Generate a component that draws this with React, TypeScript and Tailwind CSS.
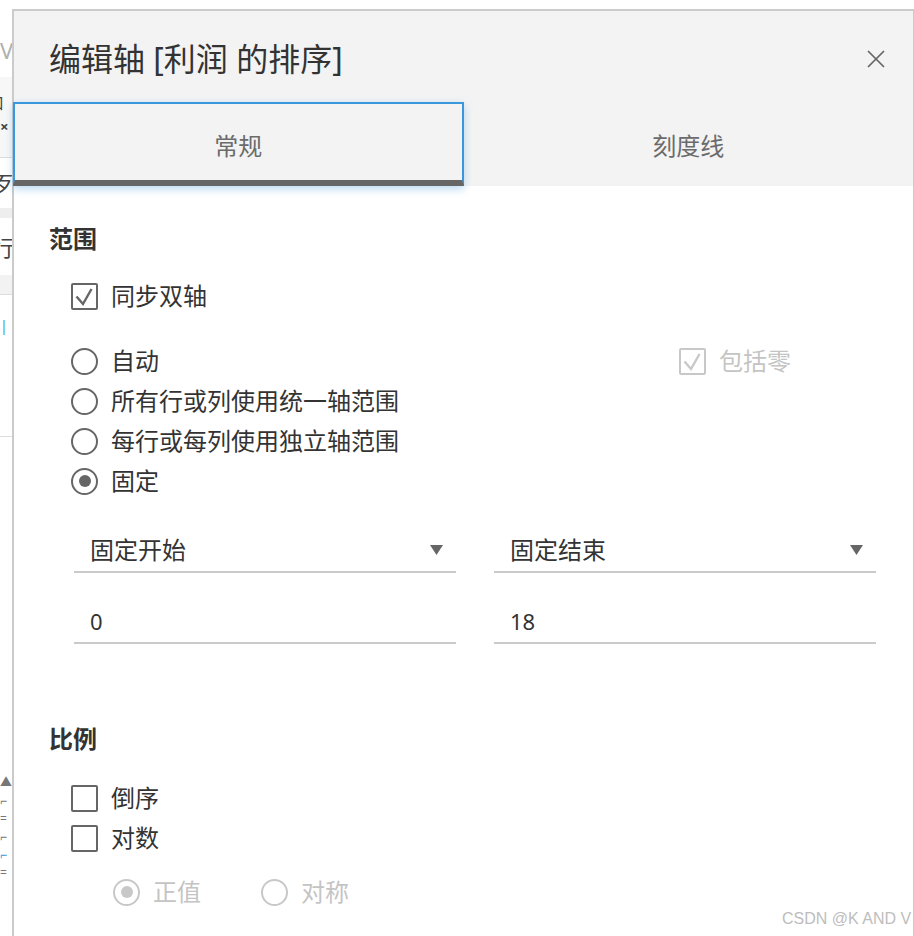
import { X } from 'lucide-react'

const font = { fontFamily: '"Noto Sans", "Noto Sans CJK SC", sans-serif' }

function Checkbox({ checked, disabled }: { checked?: boolean; disabled?: boolean }) {
    const color = disabled ? '#c8c8c8' : '#666666'
    return (
        <span
            className={`flex h-[27px] w-[27px] shrink-0 items-center justify-center rounded-[2px] border-2 ${disabled ? 'border-[#c8c8c8]' : 'border-[#666]'}`}
        >
            {checked && (
                <svg width="23" height="23" viewBox="0 0 23 23" fill="none">
                    <path d="M3.5 11.5 L10 19 L18.5 4" stroke={color} strokeWidth={2.4} />
                </svg>
            )}
        </span>
    )
}

function Radio({ checked, disabled }: { checked?: boolean; disabled?: boolean }) {
    return (
        <span
            className={`flex h-[27px] w-[27px] shrink-0 items-center justify-center rounded-full border-2 ${disabled ? 'border-[#c8c8c8]' : 'border-[#666]'}`}
        >
            {checked && (
                <span className={`h-[12px] w-[12px] rounded-full ${disabled ? 'bg-[#c8c8c8]' : 'bg-[#666]'}`} />
            )}
        </span>
    )
}

function Row({ children }: { children: React.ReactNode }) {
    return <div className="flex h-[40px] items-center gap-[13px]">{children}</div>
}

function Label({ text, disabled }: { text: string; disabled?: boolean }) {
    return (
        <span className={`text-[24px] leading-none ${disabled ? 'text-[#c4c4c4]' : 'text-[#333]'}`}>{text}</span>
    )
}

function Dropdown({ text }: { text: string }) {
    return (
        <div className="flex h-[44px] w-[382px] items-center justify-between border-b-2 border-[#cacaca] pl-[16px] pr-[13px]">
            <span className="text-[24px] leading-none text-[#333]">{text}</span>
            <svg width="13" height="10" viewBox="0 0 13 10">
                <path d="M0 0 H13 L6.5 10 Z" fill="#666" />
            </svg>
        </div>
    )
}

function Field({ value }: { value: string }) {
    return (
        <div className="flex h-[44px] w-[382px] items-center border-b-2 border-[#cacaca] pl-[16px]">
            <span className="text-[22px] leading-none text-[#333]">{value}</span>
        </div>
    )
}

export default function App() {
    return (
        <div className="relative flex h-[936px] w-[914px] overflow-hidden bg-white" style={font}>
            {/* page behind the dialog */}
            <div className="flex w-[12px] shrink-0 flex-col overflow-hidden text-[22px] leading-none">
                <div className="flex h-[77px] items-end pb-[16px] text-[#b0b0b0]">V</div>
                <div className="flex h-[81px] flex-col gap-[8px] border-b border-[#ddd] bg-[#f7f7f7] pt-[18px] text-[#444]">
                    <span className="-ml-[12px] text-[16px]">口</span>
                    <span className="text-[15px] font-bold">×</span>
                </div>
                <div className="flex h-[50px] items-center text-[#444]"><span className="-ml-[8px]">歹</span></div>
                <div className="h-[10px] bg-[#eee]" />
                <div className="flex h-[57px] items-center text-[#444]"><span className="-ml-[8px]">行</span></div>
                <div className="h-[20px] border-b border-[#ddd] bg-[#f2f2f2]" />
                <div className="h-[142px] border-b border-[#ddd] pt-[24px] text-[14px] text-[#3a96dd]">|</div>
                <div className="h-[340px]" />
                <div className="flex h-[150px] flex-col gap-[6px] text-[12px] text-[#777]">
                    <span>▲</span>
                    <span>⌐</span>
                    <span>=</span>
                    <span>⌐</span>
                    <span className="text-[#3a96dd]">⌐</span>
                    <span>=</span>
                </div>
            </div>

            {/* dialog */}
            <div className="mt-[9px] flex flex-1 flex-col border-l-2 border-r border-t-2 border-[#cbcbcb]">
                <div className="flex h-[91px] items-center justify-between bg-[#f3f3f3] pl-[35px] pr-[22px] pt-[4px]">
                    <span className="text-[32px] leading-none text-[#333]">编辑轴 [利润 的排序]</span>
                    <X size={30} strokeWidth={1.4} className="text-[#666]" />
                </div>

                <div className="grid h-[84px] grid-cols-2 bg-[#f3f3f3]">
                    <div className="-ml-[1px] flex items-center justify-center border-2 border-b-[6px] border-[#3a96dd] border-b-[#666] pt-[7px] shadow-[0_3px_8px_rgba(58,150,221,0.35)]">
                        <span className="text-[24px] leading-none text-[#6b6b6b]">常规</span>
                    </div>
                    <div className="flex items-center justify-center pt-[4px]">
                        <span className="text-[24px] leading-none text-[#6b6b6b]">刻度线</span>
                    </div>
                </div>

                <div className="flex flex-col pl-[35px]">
                    <div className="mt-[37px] text-[24px] font-bold leading-[32px] text-[#333]">范围</div>

                    <div className="ml-[22px] mt-[21px]">
                        <Row>
                            <Checkbox checked />
                            <Label text="同步双轴" />
                        </Row>
                    </div>

                    <div className="ml-[22px] mt-[25px] flex">
                        <div className="flex w-[608px] flex-col">
                            <Row>
                                <Radio />
                                <Label text="自动" />
                            </Row>
                            <Row>
                                <Radio />
                                <Label text="所有行或列使用统一轴范围" />
                            </Row>
                            <Row>
                                <Radio />
                                <Label text="每行或每列使用独立轴范围" />
                            </Row>
                            <Row>
                                <Radio checked />
                                <Label text="固定" />
                            </Row>
                        </div>
                        <div>
                            <Row>
                                <Checkbox checked disabled />
                                <Label text="包括零" disabled />
                            </Row>
                        </div>
                    </div>

                    <div className="ml-[25px] mt-[28px] flex gap-[38px]">
                        <Dropdown text="固定开始" />
                        <Dropdown text="固定结束" />
                    </div>
                    <div className="ml-[25px] mt-[27px] flex gap-[38px]">
                        <Field value="0" />
                        <Field value="18" />
                    </div>

                    <div className="mt-[79px] text-[24px] font-bold leading-[32px] text-[#333]">比例</div>

                    <div className="ml-[22px] mt-[23px] flex flex-col">
                        <Row>
                            <Checkbox />
                            <Label text="倒序" />
                        </Row>
                        <Row>
                            <Checkbox />
                            <Label text="对数" />
                        </Row>
                    </div>

                    <div className="ml-[64px] mt-[14px] flex">
                        <div className="w-[148px]">
                            <Row>
                                <Radio checked disabled />
                                <Label text="正值" disabled />
                            </Row>
                        </div>
                        <Row>
                            <Radio disabled />
                            <Label text="对称" disabled />
                        </Row>
                    </div>
                </div>
            </div>

            {/* watermark */}
            <span
                className="absolute left-[782px] top-[911px] whitespace-nowrap text-[16px] leading-none text-[#bdbdbd]"
                style={{ fontFamily: '"Liberation Sans", sans-serif' }}
            >
                CSDN @K AND V
            </span>
        </div>
    )
}
